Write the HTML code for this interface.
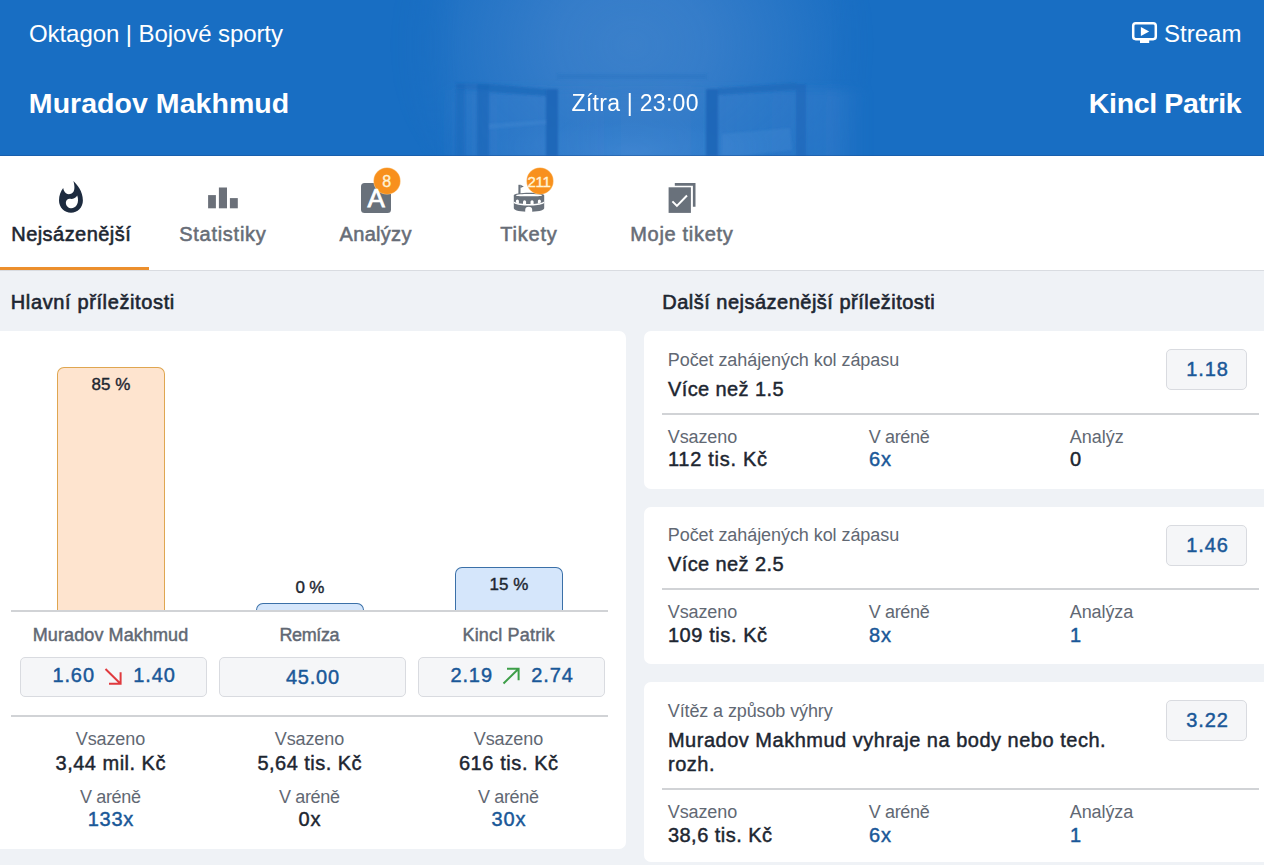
<!DOCTYPE html>
<html lang="cs">
<head>
<meta charset="utf-8">
<title>Muradov Makhmud - Kincl Patrik</title>
<style>
html,body{margin:0;padding:0;}
body{background:#eff2f6;font-family:"Liberation Sans",sans-serif;overflow:hidden;}
#page{position:relative;width:1264px;height:865px;overflow:hidden;background:#eff2f6;}
.t{position:absolute;white-space:pre;font-family:"Liberation Sans",sans-serif;}
.abs{position:absolute;}
#header{left:0;top:0;width:1264px;height:156px;background:#186ec3;overflow:hidden;}
#tabs{left:0;top:156px;width:1264px;height:114px;background:#fff;border-bottom:1px solid #d9dce1;}
#tabline{left:0;top:267px;width:149px;height:3px;background:#ec8f2d;}
.card{background:#fff;border-radius:7px;}
.odd{background:#f5f6f8;border:1px solid #d9dbe0;border-radius:5px;box-sizing:border-box;}
.hr{background:#d1d3d6;height:2px;}
.bar{box-sizing:border-box;border-radius:7px 7px 0 0;border-bottom:none !important;}
.badge{width:27px;height:27px;border-radius:50%;background:#f8901d;box-shadow:0 0 0 0.6px #fbc27a;}

</style>
</head>
<body>
<div id="page">
<div id="header" class="abs">
<svg class="abs" style="left:0;top:0" width="1264" height="156" viewBox="0 0 1264 156">
<defs>
<radialGradient id="glow" cx="632" cy="45" r="1" gradientUnits="userSpaceOnUse" gradientTransform="translate(632 45) scale(245 210) translate(-632 -45)">
<stop offset="0" stop-color="#3b80ca" stop-opacity="1"/>
<stop offset="0.3" stop-color="#3a7fca" stop-opacity="0.88"/>
<stop offset="0.6" stop-color="#3a7fca" stop-opacity="0.5"/>
<stop offset="0.85" stop-color="#3a7fca" stop-opacity="0.15"/>
<stop offset="1" stop-color="#3a7fca" stop-opacity="0"/>
</radialGradient>
<linearGradient id="fade" x1="380" x2="880" y1="0" y2="0" gradientUnits="userSpaceOnUse">
<stop offset="0" stop-color="#fff" stop-opacity="0"/>
<stop offset="0.16" stop-color="#fff" stop-opacity="1"/>
<stop offset="0.9" stop-color="#fff" stop-opacity="1"/>
<stop offset="1" stop-color="#fff" stop-opacity="0"/>
</linearGradient>
<mask id="fm" maskUnits="userSpaceOnUse" x="380" y="0" width="500" height="156"><rect x="380" y="0" width="500" height="156" fill="url(#fade)"/></mask>
<radialGradient id="floor" cx="632" cy="152" r="1" gradientUnits="userSpaceOnUse" gradientTransform="translate(632 152) scale(150 34) translate(-632 -152)">
<stop offset="0" stop-color="#4a8fd9" stop-opacity="0.6"/>
<stop offset="0.7" stop-color="#3a84d2" stop-opacity="0.3"/>
<stop offset="1" stop-color="#2a7acb" stop-opacity="0"/>
</radialGradient>
<linearGradient id="cagebg" x1="440" x2="872" y1="0" y2="0" gradientUnits="userSpaceOnUse">
<stop offset="0" stop-color="#367dcb" stop-opacity="0"/>
<stop offset="0.1" stop-color="#367dcb" stop-opacity="0.5"/>
<stop offset="0.4" stop-color="#367dcb" stop-opacity="0.25"/>
<stop offset="0.6" stop-color="#367dcb" stop-opacity="0.25"/>
<stop offset="0.93" stop-color="#367dcb" stop-opacity="0.5"/>
<stop offset="1" stop-color="#367dcb" stop-opacity="0"/>
</linearGradient>
<filter id="bl5" x="-5%" y="-30%" width="110%" height="160%"><feGaussianBlur stdDeviation="5"/></filter>
<filter id="bl" x="-5%" y="-20%" width="110%" height="140%"><feGaussianBlur stdDeviation="1.1"/></filter>
</defs>
<g mask="url(#fm)">
<rect x="380" y="0" width="500" height="156" fill="url(#glow)"/>
<rect x="470" y="110" width="324" height="46" fill="url(#floor)"/>
<rect x="440" y="90" width="432" height="80" fill="url(#cagebg)" filter="url(#bl5)"/>
<g filter="url(#bl)">
<rect x="557" y="74" width="150" height="5" fill="#2a70bd" opacity="0.4"/>
<path d="M489 84 L546 89 L546 96 L489 92 Z" fill="#1e68b9" opacity="0.75"/>
<path d="M796 83 L718 88 L718 95 L796 90 Z" fill="#1e68b9" opacity="0.65"/>
<path d="M456 83 L489 84 L489 90 L456 89 Z" fill="#1e68b9" opacity="0.5"/>
<path d="M489 124 L546 120 L546 124 L489 129 Z" fill="#4a8fd8" opacity="0.3"/>
<path d="M722 134 L790 128 L792 150 L740 156 L722 156 Z" fill="#4a8fd8" opacity="0.28"/>
<rect x="546" y="89" width="12" height="67" fill="#1b65b7" opacity="0.92"/>
<rect x="706" y="89" width="12" height="67" fill="#1b65b7" opacity="0.92"/>
<rect x="477" y="84" width="12" height="72" fill="#1b66b8" opacity="0.7"/>
<rect x="796" y="84" width="10" height="72" fill="#1b66b8" opacity="0.6"/>
<rect x="456" y="84" width="9" height="72" fill="#1b66b8" opacity="0.45"/>
</g>
</g>
</svg>
</div>
<div class="abs" style="left:0;top:155px;width:1264px;height:1px;background:rgba(24,72,140,0.4);"></div>
<div id="tabs" class="abs"></div>
<div id="tabline" class="abs"></div>

<!-- left card -->
<div class="abs card" style="left:-8px;top:331px;width:634px;height:518px;"></div>
<div class="abs bar" style="left:57px;top:367px;width:108px;height:243px;background:#fee4cf;border:1px solid #dfa650;"></div>
<div class="abs bar" style="left:256px;top:603px;width:108px;height:7px;background:#d5e6fb;border:1px solid #3b70a8;"></div>
<div class="abs bar" style="left:455px;top:567px;width:108px;height:43px;background:#d5e6fb;border:1px solid #3b70a8;"></div>
<div class="abs hr" style="left:11px;top:609.5px;width:597px;"></div>
<div class="abs odd" style="left:20px;top:657px;width:187px;height:40px;"></div>
<div class="abs odd" style="left:219px;top:657px;width:187px;height:40px;"></div>
<div class="abs odd" style="left:418px;top:657px;width:187px;height:40px;"></div>
<div class="abs hr" style="left:11px;top:714.5px;width:597px;"></div>

<!-- right cards -->
<div class="abs card" style="left:644px;top:331px;width:640px;height:158px;"></div>
<div class="abs card" style="left:644px;top:507px;width:640px;height:157px;"></div>
<div class="abs card" style="left:644px;top:682px;width:640px;height:180px;"></div>
<div class="abs hr" style="left:662px;top:412.5px;width:597px;"></div>
<div class="abs hr" style="left:662px;top:588px;width:597px;"></div>
<div class="abs hr" style="left:662px;top:787.5px;width:597px;"></div>
<div class="abs odd" style="left:1166px;top:349px;width:81px;height:40.5px;"></div>
<div class="abs odd" style="left:1166px;top:525px;width:81px;height:40.5px;"></div>
<div class="abs odd" style="left:1166px;top:700px;width:81px;height:40.5px;"></div>

<!-- icons -->
<svg class="abs" style="left:1130px;top:20px" width="30" height="26" viewBox="0 0 30 26">
<rect x="3.2" y="3.2" width="22.6" height="16" rx="2.6" fill="none" stroke="#fff" stroke-width="2.5"/>
<rect x="10" y="20" width="9.2" height="3" fill="#fff"/>
<path d="M10.9 7 L19.2 11.5 L10.9 16 Z" fill="#fff"/>
</svg>
<svg class="abs" style="left:59px;top:181px" width="24" height="32" viewBox="0 0 24 32">
<path fill="#1d2b3f" fill-rule="evenodd" d="M14.4 0 C18 3.5 23.9 10 23.9 19.5 C23.9 26.5 18.5 31.7 12 31.7 C5.5 31.7 0 26.5 0 19.5 C0 14.5 1.8 10.2 4.2 7.1 C4.6 9.5 5.5 11.2 7 12.3 C9 13.6 12 13.4 13.8 11.6 C16 9.3 15.8 5 14.4 0 Z M18.2 14.4 C19.5 18 19.2 21 18 23.5 C16.6 26.3 13.8 27.6 11.5 27.2 C8.5 26.7 6.6 24 6.9 21.2 C7.2 18.8 9 17.5 11 17.8 C14 18.2 16.8 17 18.2 14.4 Z"/>
</svg>
<svg class="abs" style="left:207px;top:186px" width="32" height="24" viewBox="0 0 32 24">
<rect x="1.1" y="9.1" width="7.8" height="13.2" fill="#6b7079"/>
<rect x="11.9" y="1.5" width="8.1" height="20.8" fill="#6b7079"/>
<rect x="22.9" y="12.1" width="7.9" height="10.2" fill="#6b7079"/>
</svg>
<div class="abs" style="left:361px;top:183px;width:30px;height:30px;border-radius:3.5px;background:#69717b;"></div>
<div class="abs badge" style="left:373.5px;top:168.2px;width:26.3px;height:26.3px;"></div>
<svg class="abs" style="left:512px;top:183px" width="34" height="30" viewBox="0 0 34 30">
<g fill="#69717b">
<rect x="6.4" y="1.8" width="2.1" height="11"/>
<path d="M8.4 1.8 L11.8 3.4 L8.4 5 Z"/>
<path d="M1.8 12.4 C1.8 8.8 32.2 8.8 32.2 12.4 L32.2 25.2 C32.2 30 1.8 30 1.8 25.2 Z"/>
</g>
<path d="M4 12.4 C4 10.6 30 10.6 30 12.4 C30 13.6 4 13.6 4 12.4 Z" fill="#fff"/>
<path d="M1.8 18.4 C8 22 26 22 32.2 18.4 L32.2 19.9 C26 23.5 8 23.5 1.8 19.9 Z" fill="#fff"/>
<g fill="#fff">
<path d="M3.9 19.6 v-1.7 a1.5 1.5 0 0 1 3 0 v2.8 Z"/>
<path d="M11 21.6 v-2.8 a1.55 1.55 0 0 1 3.1 0 v3.1 Z"/>
<path d="M18.5 21.9 v-3.1 a1.55 1.55 0 0 1 3.1 0 v2.8 Z"/>
<path d="M25.9 20.7 v-2.8 a1.5 1.5 0 0 1 3 0 v1.7 Z"/>
<path d="M13.2 29.5 v-2.4 a3.5 3.3 0 0 1 7 0 v2.4 Z"/>
</g>
</svg>
<div class="abs badge" style="left:526.8px;top:167.8px;width:26.5px;height:26.5px;"></div>
<svg class="abs" style="left:666px;top:181px" width="32" height="34" viewBox="0 0 32 34">
<path d="M8.8 2 H29.5 V25.8 H26.9 V4.8 H8.8 Z" fill="#69717b"/>
<rect x="2.6" y="6.3" width="22.3" height="25.6" fill="#69717b"/>
<path d="M6.4 20.4 L10.9 24.9 L21 14.5" fill="none" stroke="#fff" stroke-width="2"/>
</svg>
<!-- arrows -->
<svg class="abs" style="left:103px;top:665.5px" width="20" height="20" viewBox="0 0 20 20">
<path d="M2.5 3 L17 17.2 M17.6 6.2 V17.8 H6" fill="none" stroke="#e03a3e" stroke-width="2"/>
</svg>
<svg class="abs" style="left:501px;top:665.5px" width="20" height="20" viewBox="0 0 20 20">
<path d="M2.5 17.5 L17 3.3 M6 2.7 H17.6 V14.3" fill="none" stroke="#3d9e48" stroke-width="2"/>
</svg>

<span class="t" style="left:29.04px;top:18.98px;font-size:24px;line-height:29px;color:#ffffff;letter-spacing:-0.081px;">Oktagon | Bojové sporty</span>
<span class="t" style="left:28.86px;top:85.92px;font-size:28.5px;line-height:34px;color:#ffffff;font-weight:700;letter-spacing:0.042px;">Muradov Makhmud</span>
<span class="t" style="left:571.58px;top:89.03px;font-size:23px;line-height:28px;color:#ffffff;letter-spacing:0.271px;">Zítra | 23:00</span>
<span class="t" style="left:1164.04px;top:18.98px;font-size:24px;line-height:29px;color:#ffffff;letter-spacing:0.012px;">Stream</span>
<span class="t" style="left:1088.86px;top:85.92px;font-size:28.5px;line-height:34px;color:#ffffff;font-weight:700;letter-spacing:-0.367px;">Kincl Patrik</span>
<span class="t" style="left:11.27px;top:222.07px;font-size:20px;line-height:24px;color:#1d2631;letter-spacing:0.449px;-webkit-text-stroke:0.55px #1d2631;">Nejsázenější</span>
<span class="t" style="left:179.18px;top:222.07px;font-size:20px;line-height:24px;color:#676d77;letter-spacing:0.735px;-webkit-text-stroke:0.55px #676d77;">Statistiky</span>
<span class="t" style="left:339.57px;top:222.07px;font-size:20px;line-height:24px;color:#676d77;letter-spacing:0.303px;-webkit-text-stroke:0.55px #676d77;">Analýzy</span>
<span class="t" style="left:500.27px;top:222.07px;font-size:20px;line-height:24px;color:#676d77;letter-spacing:0.768px;-webkit-text-stroke:0.55px #676d77;">Tikety</span>
<span class="t" style="left:630.27px;top:222.07px;font-size:20px;line-height:24px;color:#676d77;letter-spacing:0.686px;-webkit-text-stroke:0.55px #676d77;">Moje tikety</span>
<span class="t" style="left:367.43px;top:183.49px;font-size:26px;line-height:31px;color:#ffffff;-webkit-text-stroke:0.75px #ffffff;">A</span>
<span class="t" style="left:382.15px;top:172.16px;font-size:16px;line-height:19px;color:#fff3d6;-webkit-text-stroke:0.35px #fff3d6;">8</span>
<span class="t" style="left:527.55px;top:172.60px;font-size:15px;line-height:18px;color:#fff3d6;letter-spacing:-0.311px;-webkit-text-stroke:0.4px #fff3d6;">211</span>
<span class="t" style="left:10.80px;top:290.07px;font-size:20px;line-height:24px;color:#1d2631;letter-spacing:0.623px;-webkit-text-stroke:0.6px #1d2631;">Hlavní příležitosti</span>
<span class="t" style="left:662.30px;top:290.07px;font-size:20px;line-height:24px;color:#1d2631;letter-spacing:0.487px;-webkit-text-stroke:0.6px #1d2631;">Další nejsázenější příležitosti</span>
<span class="t" style="left:91.52px;top:374.71px;font-size:17px;line-height:20px;color:#1d2631;letter-spacing:0.070px;-webkit-text-stroke:0.4px #1d2631;">85 %</span>
<span class="t" style="left:295.52px;top:577.71px;font-size:17px;line-height:20px;color:#1d2631;letter-spacing:-0.168px;-webkit-text-stroke:0.4px #1d2631;">0 %</span>
<span class="t" style="left:489.52px;top:574.71px;font-size:17px;line-height:20px;color:#1d2631;letter-spacing:0.070px;-webkit-text-stroke:0.4px #1d2631;">15 %</span>
<span class="t" style="left:32.75px;top:623.76px;font-size:18px;line-height:22px;color:#616873;letter-spacing:0.101px;-webkit-text-stroke:0.45px #616873;">Muradov Makhmud</span>
<span class="t" style="left:279.50px;top:623.76px;font-size:18px;line-height:22px;color:#616873;letter-spacing:-0.405px;-webkit-text-stroke:0.45px #616873;">Remíza</span>
<span class="t" style="left:462.50px;top:623.76px;font-size:18px;line-height:22px;color:#616873;letter-spacing:0.178px;-webkit-text-stroke:0.45px #616873;">Kincl Patrik</span>
<span class="t" style="left:52.38px;top:663.07px;font-size:20px;line-height:24px;color:#1a5898;letter-spacing:0.904px;-webkit-text-stroke:0.45px #1a5898;">1.60</span>
<span class="t" style="left:133.18px;top:663.07px;font-size:20px;line-height:24px;color:#1a5898;letter-spacing:0.904px;-webkit-text-stroke:0.45px #1a5898;">1.40</span>
<span class="t" style="left:285.93px;top:665.07px;font-size:20px;line-height:24px;color:#1a5898;letter-spacing:0.772px;-webkit-text-stroke:0.45px #1a5898;">45.00</span>
<span class="t" style="left:450.38px;top:663.07px;font-size:20px;line-height:24px;color:#1a5898;letter-spacing:0.904px;-webkit-text-stroke:0.45px #1a5898;">2.19</span>
<span class="t" style="left:531.17px;top:663.07px;font-size:20px;line-height:24px;color:#1a5898;letter-spacing:0.904px;-webkit-text-stroke:0.45px #1a5898;">2.74</span>
<span class="t" style="left:75.78px;top:728.26px;font-size:18px;line-height:22px;color:#616873;letter-spacing:-0.104px;">Vsazeno</span>
<span class="t" style="left:55.58px;top:750.87px;font-size:20px;line-height:24px;color:#1d2631;letter-spacing:0.488px;-webkit-text-stroke:0.45px #1d2631;">3,44 mil. Kč</span>
<span class="t" style="left:80.03px;top:785.76px;font-size:18px;line-height:22px;color:#616873;letter-spacing:-0.351px;">V aréně</span>
<span class="t" style="left:87.67px;top:807.37px;font-size:20px;line-height:24px;color:#1a5898;letter-spacing:0.758px;-webkit-text-stroke:0.45px #1a5898;">133x</span>
<span class="t" style="left:274.78px;top:728.26px;font-size:18px;line-height:22px;color:#616873;letter-spacing:-0.104px;">Vsazeno</span>
<span class="t" style="left:257.43px;top:750.87px;font-size:20px;line-height:24px;color:#1d2631;letter-spacing:0.474px;-webkit-text-stroke:0.45px #1d2631;">5,64 tis. Kč</span>
<span class="t" style="left:279.03px;top:785.76px;font-size:18px;line-height:22px;color:#616873;letter-spacing:-0.351px;">V aréně</span>
<span class="t" style="left:298.43px;top:807.37px;font-size:20px;line-height:24px;color:#1d2631;letter-spacing:1.025px;-webkit-text-stroke:0.45px #1d2631;">0x</span>
<span class="t" style="left:473.78px;top:728.26px;font-size:18px;line-height:22px;color:#616873;letter-spacing:-0.104px;">Vsazeno</span>
<span class="t" style="left:458.93px;top:750.87px;font-size:20px;line-height:24px;color:#1d2631;letter-spacing:0.576px;-webkit-text-stroke:0.45px #1d2631;">616 tis. Kč</span>
<span class="t" style="left:478.03px;top:785.76px;font-size:18px;line-height:22px;color:#616873;letter-spacing:-0.351px;">V aréně</span>
<span class="t" style="left:491.43px;top:807.37px;font-size:20px;line-height:24px;color:#1a5898;letter-spacing:0.950px;-webkit-text-stroke:0.45px #1a5898;">30x</span>
<span class="t" style="left:667.78px;top:348.76px;font-size:18px;line-height:22px;color:#616873;letter-spacing:-0.066px;">Počet zahájených kol zápasu</span>
<span class="t" style="left:667.93px;top:376.87px;font-size:20px;line-height:24px;color:#1d2631;letter-spacing:0.406px;-webkit-text-stroke:0.45px #1d2631;">Více než 1.5</span>
<span class="t" style="left:1186.17px;top:357.27px;font-size:20px;line-height:24px;color:#1a5898;letter-spacing:0.904px;-webkit-text-stroke:0.45px #1a5898;">1.18</span>
<span class="t" style="left:667.78px;top:425.76px;font-size:18px;line-height:22px;color:#616873;letter-spacing:-0.104px;">Vsazeno</span>
<span class="t" style="left:667.93px;top:447.27px;font-size:20px;line-height:24px;color:#1d2631;letter-spacing:0.724px;-webkit-text-stroke:0.45px #1d2631;">112 tis. Kč</span>
<span class="t" style="left:868.78px;top:425.76px;font-size:18px;line-height:22px;color:#616873;letter-spacing:-0.351px;">V aréně</span>
<span class="t" style="left:868.93px;top:447.27px;font-size:20px;line-height:24px;color:#1a5898;letter-spacing:1.025px;-webkit-text-stroke:0.45px #1a5898;">6x</span>
<span class="t" style="left:1069.78px;top:425.76px;font-size:18px;line-height:22px;color:#616873;letter-spacing:-0.018px;">Analýz</span>
<span class="t" style="left:1069.92px;top:447.27px;font-size:20px;line-height:24px;color:#1d2631;-webkit-text-stroke:0.45px #1d2631;">0</span>
<span class="t" style="left:667.78px;top:524.26px;font-size:18px;line-height:22px;color:#616873;letter-spacing:-0.066px;">Počet zahájených kol zápasu</span>
<span class="t" style="left:667.93px;top:552.37px;font-size:20px;line-height:24px;color:#1d2631;letter-spacing:0.406px;-webkit-text-stroke:0.45px #1d2631;">Více než 2.5</span>
<span class="t" style="left:1186.17px;top:532.77px;font-size:20px;line-height:24px;color:#1a5898;letter-spacing:0.904px;-webkit-text-stroke:0.45px #1a5898;">1.46</span>
<span class="t" style="left:667.78px;top:601.26px;font-size:18px;line-height:22px;color:#616873;letter-spacing:-0.104px;">Vsazeno</span>
<span class="t" style="left:667.93px;top:622.77px;font-size:20px;line-height:24px;color:#1d2631;letter-spacing:0.576px;-webkit-text-stroke:0.45px #1d2631;">109 tis. Kč</span>
<span class="t" style="left:868.78px;top:601.26px;font-size:18px;line-height:22px;color:#616873;letter-spacing:-0.351px;">V aréně</span>
<span class="t" style="left:868.93px;top:622.77px;font-size:20px;line-height:24px;color:#1a5898;letter-spacing:1.025px;-webkit-text-stroke:0.45px #1a5898;">8x</span>
<span class="t" style="left:1069.78px;top:601.26px;font-size:18px;line-height:22px;color:#616873;letter-spacing:-0.101px;">Analýza</span>
<span class="t" style="left:1069.92px;top:622.77px;font-size:20px;line-height:24px;color:#1a5898;-webkit-text-stroke:0.45px #1a5898;">1</span>
<span class="t" style="left:667.78px;top:699.56px;font-size:18px;line-height:22px;color:#616873;letter-spacing:-0.113px;">Vítěz a způsob výhry</span>
<span class="t" style="left:667.93px;top:727.67px;font-size:20px;line-height:24px;color:#1d2631;letter-spacing:0.506px;-webkit-text-stroke:0.45px #1d2631;">Muradov Makhmud vyhraje na body nebo tech.</span>
<span class="t" style="left:667.93px;top:751.87px;font-size:20px;line-height:24px;color:#1d2631;letter-spacing:0.545px;-webkit-text-stroke:0.45px #1d2631;">rozh.</span>
<span class="t" style="left:1186.17px;top:708.07px;font-size:20px;line-height:24px;color:#1a5898;letter-spacing:0.904px;-webkit-text-stroke:0.45px #1a5898;">3.22</span>
<span class="t" style="left:667.78px;top:801.06px;font-size:18px;line-height:22px;color:#616873;letter-spacing:-0.104px;">Vsazeno</span>
<span class="t" style="left:667.93px;top:822.57px;font-size:20px;line-height:24px;color:#1d2631;letter-spacing:0.474px;-webkit-text-stroke:0.45px #1d2631;">38,6 tis. Kč</span>
<span class="t" style="left:868.78px;top:801.06px;font-size:18px;line-height:22px;color:#616873;letter-spacing:-0.351px;">V aréně</span>
<span class="t" style="left:868.93px;top:822.57px;font-size:20px;line-height:24px;color:#1a5898;letter-spacing:1.025px;-webkit-text-stroke:0.45px #1a5898;">6x</span>
<span class="t" style="left:1069.78px;top:801.06px;font-size:18px;line-height:22px;color:#616873;letter-spacing:-0.101px;">Analýza</span>
<span class="t" style="left:1069.92px;top:822.57px;font-size:20px;line-height:24px;color:#1a5898;-webkit-text-stroke:0.45px #1a5898;">1</span>
</div>
</body>
</html>
